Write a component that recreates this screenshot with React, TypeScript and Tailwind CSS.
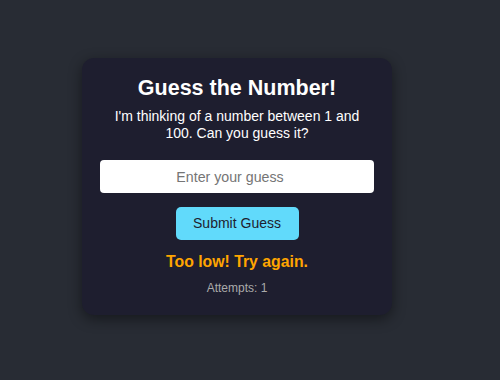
export default function App() {
  return (
    <div className="min-h-[380px] bg-[#282c34] pl-[82px] pt-[58px] font-['Liberation_Sans',Arial,sans-serif]">
      <div className="flex w-[310px] flex-col items-center rounded-xl bg-[#1e1e2f] px-[18px] pb-[20px] pt-[18px] text-center shadow-[0_4px_14px_rgba(0,0,0,0.45)]">
        <h1 className="text-[21.5px] font-bold leading-[24px] text-white">Guess the Number!</h1>
        <p className="mt-[8px] text-[14px] leading-[17px] text-white">
          I'm thinking of a number between 1 and 100. Can you guess it?
        </p>
        <input
          type="text"
          placeholder="Enter your guess"
          className="mt-[18px] h-[33px] w-full rounded-[4px] bg-white pl-2 pr-[22px] text-center text-[14.2px] text-black outline-none placeholder:text-[#757575]"
        />
        <button className="mt-[14px] h-[33px] w-[123px] rounded-[5px] bg-[#61dafb] text-[14px] text-[#1e1e2f]">
          Submit Guess
        </button>
        <div className="mt-[13px] text-[15.8px] font-bold leading-[17px] text-[#ffa500]">
          Too low! Try again.
        </div>
        <div className="mt-[11px] text-[12px] leading-[14px] text-[#aaaaaa]">Attempts: 1</div>
      </div>
    </div>
  );
}
